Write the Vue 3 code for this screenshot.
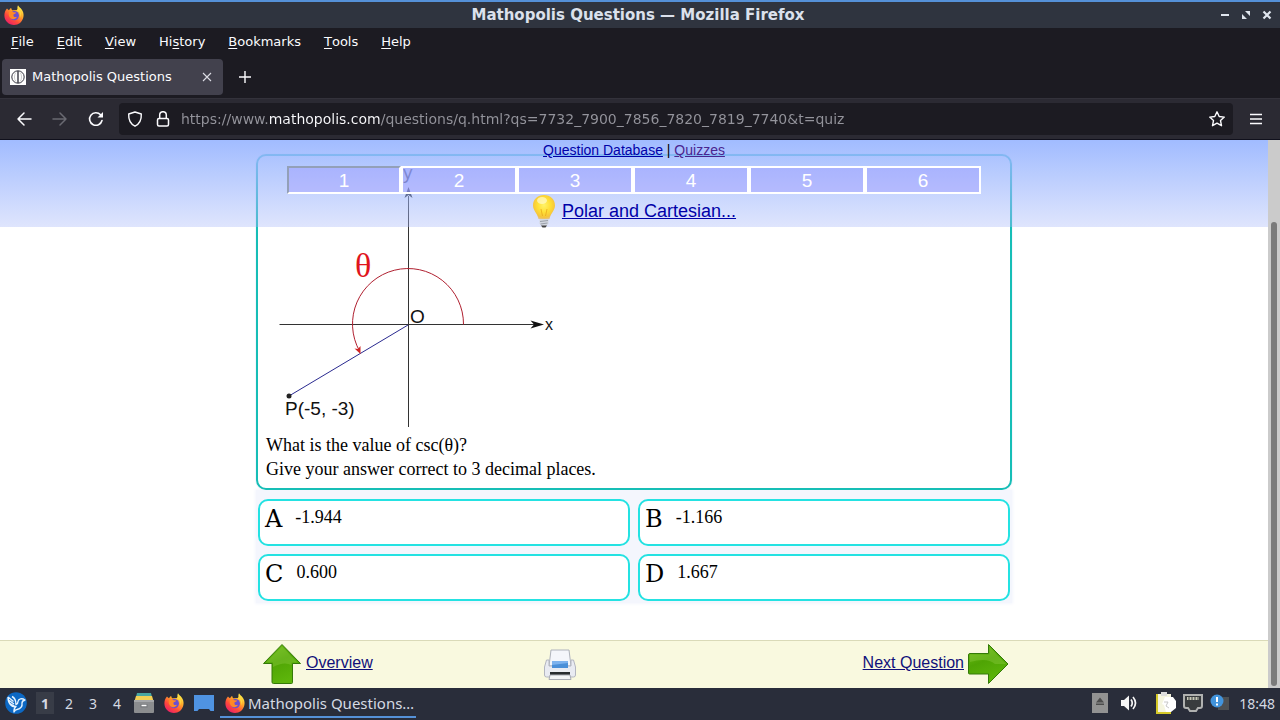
<script setup>
import { ref } from 'vue'

const menus = [
  { pre: '', key: 'F', post: 'ile' },
  { pre: '', key: 'E', post: 'dit' },
  { pre: '', key: 'V', post: 'iew' },
  { pre: 'Hi', key: 's', post: 'tory' },
  { pre: '', key: 'B', post: 'ookmarks' },
  { pre: '', key: 'T', post: 'ools' },
  { pre: '', key: 'H', post: 'elp' },
]
const address = ref('https://www.mathopolis.com/questions/q.html?qs=7732_7900_7856_7820_7819_7740&t=quiz')
const current = ref(1)
const answers = [
  { letter: 'A', value: '-1.944' },
  { letter: 'B', value: '-1.166' },
  { letter: 'C', value: '0.600' },
  { letter: 'D', value: '1.667' },
]
const desktops = [1, 2, 3, 4]
</script>

<template>
  <div class="screen">
    <svg class="defs" width="0" height="0" aria-hidden="true">
      <defs>
        <linearGradient id="fox-body" x1="0.85" y1="0.1" x2="0.25" y2="0.95">
          <stop offset="0" stop-color="#fff04a" />
          <stop offset="0.35" stop-color="#ffa52a" />
          <stop offset="0.7" stop-color="#ff4b3a" />
          <stop offset="1" stop-color="#ed2264" />
        </linearGradient>
        <linearGradient id="leaf" x1="0" y1="0" x2="0.4" y2="1">
          <stop offset="0" stop-color="#75c11c" />
          <stop offset="0.5" stop-color="#4fa404" />
          <stop offset="1" stop-color="#5db50b" />
        </linearGradient>
        <symbol id="firefox" viewBox="0 0 20 20">
          <path d="M3 3.5 C3.6 4.4 4.2 5 5 5.3 C5.7 4 6.4 3.4 7.2 3 C7.2 4 7.6 4.7 8.3 5.2 L14 5 C13.2 3.3 13.2 1.8 14 .3 C15 2 16.5 3 17.5 4.2 C19.2 6.4 20 9 19.4 12 C18.4 17 14.6 20 10 20 C4.8 20 .6 16 .4 10.8 C.3 8 1.2 5.4 3 3.5 Z" fill="url(#fox-body)" />
          <circle cx="10.3" cy="10.6" r="4.7" fill="#6b4fd0" />
          <path d="M5.3 6.3 C7 5.7 8.4 6.1 9.5 7.2 L12.2 7.5 C11.7 8.6 10.7 9 9.5 9.4 C9 11.6 10.7 12.6 13 11.7 C12 14 9 15 6.8 13.4 C4.6 12 4.2 9.2 5.3 6.3 Z" fill="#ff8926" />
          <path d="M12.6 5.3 C15.6 6.6 17 9.5 16 12.8 C18 9.5 17 6 14 3.3 Z" fill="#ffd83f" />
        </symbol>
      </defs>
    </svg>

    <header class="titlebar">
      <svg class="icon20" aria-hidden="true"><use href="#firefox" /></svg>
      <h1 class="title">Mathopolis Questions — Mozilla Firefox</h1>
      <div class="window-buttons">
        <button type="button" aria-label="Minimize"><svg width="10" height="10"><path d="M1 5H9" stroke="#dfe5ee" stroke-width="2" /></svg></button>
        <button type="button" aria-label="Restore"><svg width="10" height="10"><path d="M4 1H9V6ZM1 4V9H6Z" fill="#dfe5ee" /></svg></button>
        <button type="button" aria-label="Close"><svg width="10" height="10"><path d="M1.5 1.5L8.5 8.5M8.5 1.5L1.5 8.5" stroke="#dfe5ee" stroke-width="2.2" /></svg></button>
      </div>
    </header>

    <nav class="menubar" aria-label="Menu">
      <button v-for="m in menus" :key="m.key + m.post" type="button">{{ m.pre }}<u>{{ m.key }}</u>{{ m.post }}</button>
    </nav>

    <div class="tabs">
      <div class="tab">
        <svg width="16" height="16" aria-hidden="true">
          <rect width="16" height="16" fill="#fff" />
          <circle cx="8" cy="8" r="6.2" fill="none" stroke="#353540" stroke-width="1" />
          <path d="M8 2V14" stroke="#353540" stroke-width="1.4" />
          <path d="M5.8 3.5C4 6 4 10 5.8 12.5M10.2 3.5C12 6 12 10 10.2 12.5" fill="none" stroke="#aaa" stroke-width=".6" />
        </svg>
        <span class="tab-title">Mathopolis Questions</span>
        <button type="button" aria-label="Close tab"><svg width="10" height="10"><path d="M1 1L9 9M9 1L1 9" stroke="#dcdce4" stroke-width="1.1" /></svg></button>
      </div>
      <button class="new-tab" type="button" aria-label="New tab"><svg width="14" height="14"><path d="M7 1V13M1 7H13" stroke="#fbfbfe" stroke-width="1.4" /></svg></button>
    </div>

    <div class="toolbar">
      <button class="tool" type="button" aria-label="Back"><svg width="16" height="16"><path d="M8 2L2 8L8 14M2 8H15" fill="none" stroke="#fbfbfe" stroke-width="1.5" stroke-linecap="round" stroke-linejoin="round" /></svg></button>
      <button class="tool" type="button" aria-label="Forward" disabled><svg width="16" height="16"><path d="M8 2L14 8L8 14M14 8H1" fill="none" stroke="#6a6a72" stroke-width="1.5" stroke-linecap="round" stroke-linejoin="round" /></svg></button>
      <button class="tool" type="button" aria-label="Reload"><svg width="16" height="16"><path d="M14 9.5A6.3 6.3 0 1 1 12.6 3.8" fill="none" stroke="#fbfbfe" stroke-width="1.6" stroke-linecap="round" /><path d="M15 1V6.5H9.5Z" fill="#fbfbfe" /></svg></button>
      <div class="address">
        <svg width="16" height="16" aria-hidden="true"><path d="M8 1L14.3 3C14.6 8.6 12.8 12.8 8 15.2C3.2 12.8 1.4 8.6 1.7 3Z" fill="none" stroke="#fbfbfe" stroke-width="1.4" stroke-linejoin="round" /></svg>
        <svg width="16" height="16" aria-hidden="true"><path d="M4.7 7.5V4A3.3 3.3 0 0 1 11.3 4V7.5" fill="none" stroke="#fbfbfe" stroke-width="1.5" /><rect x="2.5" y="7.5" width="11" height="7.5" rx="1.5" fill="none" stroke="#fbfbfe" stroke-width="1.5" /></svg>
        <input v-model="address" type="text" aria-label="Address" spellcheck="false" />
        <button type="button" aria-label="Bookmark this page"><svg width="18" height="18"><path d="M9 1.8L11.2 6.5L16.3 7.1L12.5 10.6L13.5 15.7L9 13.2L4.5 15.7L5.5 10.6L1.7 7.1L6.8 6.5Z" fill="none" stroke="#fbfbfe" stroke-width="1.4" stroke-linejoin="round" /></svg></button>
      </div>
      <button class="tool app-menu" type="button" aria-label="Application menu"><svg width="14" height="14"><path d="M1 2.5H13M1 7H13M1 11.5H13" stroke="#fbfbfe" stroke-width="1.4" /></svg></button>
    </div>

    <div class="viewport">
      <div class="page">
        <div class="page-header">
          <div class="site-links"><a href="#database">Question Database</a> | <a class="visited" href="#quizzes">Quizzes</a></div>
          <nav class="steps" aria-label="Questions">
            <button v-for="n in 6" :key="n" type="button" :class="{ current: n === current }" @click="current = n">{{ n }}</button>
          </nav>
          <div class="hint">
            <svg width="24" height="34" viewBox="0 0 24 34" aria-hidden="true">
              <defs>
                <radialGradient id="glow" cx="0.5" cy="0.42" r="0.6">
                  <stop offset="0" stop-color="#fff36a" />
                  <stop offset="0.5" stop-color="#ffdf35" />
                  <stop offset="0.85" stop-color="#f5c43c" />
                  <stop offset="1" stop-color="#e6c384" />
                </radialGradient>
              </defs>
              <path d="M12 1C5.500 1 1 5.500 1 11.500C1 16.500 5 18.500 6.500 25H17.500C19 18.500 23 16.500 23 11.500C23 5.500 18.500 1 12 1Z" fill="url(#glow)" />
              <ellipse cx="10" cy="6.5" rx="5" ry="3.5" fill="#fffbd0" opacity=".7" />
              <path d="M9 15L10.5 22M15 15L13.5 22" stroke="#e9a91c" stroke-width=".8" />
              <path d="M7.500 25H16.500V29.500L14 32.500H10L7.500 29.500Z" fill="#d3d7df" />
              <path d="M8 27.500L16 26.500M8.500 30L15.500 29" stroke="#9aa0aa" />
              <path d="M9 31.5H15L13.5 33.5H10.5Z" fill="#444" />
            </svg>
            <a href="#polar">Polar and Cartesian...</a>
          </div>
        </div>

        <main class="quiz">
          <section class="question">
            <svg class="diagram" width="300" height="271" viewBox="0 0 300 271" role="img" aria-label="Angle theta from the x axis to the point P">
              <g fill="none" stroke-width="1">
                <path d="M13.5 162.5H268M142.5 265V34" stroke="#333" />
                <path d="M197.5 162.5A55.5 55.5 0 1 0 93.5 189" stroke="#b02030" />
                <path d="M142 163L23 234" stroke="#2a2a90" />
              </g>
              <path d="M278 162.5L264.5 158.5L268 162.5L264.5 166.5Z" fill="#111" />
              <path d="M142.5 25L138.5 36L142.5 33L146.5 36Z" fill="#111" />
              <path d="M94.5 192L88.5 186.5L92 187L94.5 184Z" fill="#d02525" />
              <circle cx="23" cy="234" r="2.5" fill="#222" />
              <g class="labels">
                <text x="137" y="17">y</text>
                <text class="small" x="279" y="168">x</text>
                <text x="144" y="161">O</text>
                <text x="19" y="253">P(-5, -3)</text>
              </g>
              <text class="theta" x="89" y="115">θ</text>
            </svg>
            <p>What is the value of csc(θ)?</p>
            <p>Give your answer correct to 3 decimal places.</p>
          </section>
          <div class="answers">
            <button v-for="a in answers" :key="a.letter" type="button">
              <span class="letter">{{ a.letter }}</span>
              <span class="value">{{ a.value }}</span>
            </button>
          </div>
        </main>

        <footer class="page-footer">
          <div class="footer-inner">
            <a class="overview" href="#overview">
              <svg width="40" height="42" viewBox="0 0 40 42" aria-hidden="true">
                <path d="M20 1.5L38.5 20.5H30.5V39.5Q30.5 40.5 29.5 40.5H11.5Q10 40.5 10 39V20.5H1.500Z" fill="url(#leaf)" stroke="#347a08" stroke-linejoin="round" />
                <path d="M20 3.5L35.5 19.5H29.5V22Q22 18 11 24V19.5H4Z" fill="#8ccb42" opacity=".4" />
              </svg>
              <span>Overview</span>
            </a>
            <button class="print" type="button" aria-label="Print">
              <svg width="34" height="34" viewBox="0 0 34 34">
                <path d="M8 2H26L28 18H6Z" fill="#f4f6fb" stroke="#aeb2bc" />
                <path d="M6 12H3.5L1.5 19V27Q1.5 29 3.5 29H30.5Q32.5 29 32.5 27V19L30.5 12H28V18H6Z" fill="#e9ebf2" stroke="#b3b6c0" />
                <path d="M9 13H25V20H9Z" fill="#7db2ee" />
                <path d="M9 17L25 15V20H9Z" fill="#4b8fd8" />
                <rect x="7" y="24" width="20" height="3" fill="#262a2f" />
                <path d="M7 27H27L28 31.5H6Z" fill="#f2f3f7" stroke="#a8abb5" />
              </svg>
            </button>
            <a class="next" href="#next">
              <span>Next Question</span>
              <svg width="42" height="42" viewBox="0 0 42 42" aria-hidden="true">
                <path d="M21.5 1.5L41 21L21.5 40.5V31H2.5Q1.5 31 1.5 30V12Q1.5 10.5 3 10.5H21.5Z" fill="url(#leaf)" stroke="#347a08" stroke-linejoin="round" />
                <path d="M22.5 4L39 21H28Q20 14 3 19V11.5H22.5Z" fill="#8ccb42" opacity=".4" />
              </svg>
            </a>
          </div>
        </footer>
      </div>
      <div class="scrollbar"><div class="thumb"></div></div>
    </div>

    <footer class="taskbar">
      <button class="start" type="button" aria-label="Applications">
        <svg width="22" height="22" viewBox="0 0 22 22"><circle cx="11" cy="11" r="10.8" fill="#0c68c4" /><path d="M3 5L8.500 9.500M3.500 8L9 12M5 11.500L10 14.500M3 5C3 12 7 15.500 11 14.500C9 16 8.800 18 9 20C10 18 11 17.500 12 17.500C16 17 17.500 14 17 11C17 9.500 18 8.500 20 8C17 6 13.500 6.500 13 9.500C13 11 12.500 12 11 12.500C11 10 10 6 7 4.500" fill="none" stroke="#e4f2ff" stroke-width="1.400" stroke-linejoin="round" /></svg>
      </button>
      <div class="desktops">
        <button v-for="d in desktops" :key="d" type="button" :class="{ active: d === 1 }">{{ d }}</button>
      </div>
      <div class="launchers">
        <button type="button" aria-label="Files">
          <svg width="20" height="20" viewBox="0 0 20 20"><path d="M3 0H17L18 4H2Z" fill="#49a6a1" /><path d="M2 3H18L19.5 8H.5Z" fill="#f2cf55" /><rect y="7" width="20" height="13" rx="1" fill="#8b8d8f" /><path d="M0 7H20V9H0Z" fill="#a5a7a9" /><path d="M6.5 11H13.5V14.5H6.5Z" fill="#74777a" /><path d="M7.5 12.5H12.5" stroke="#fff" stroke-width="1.5" /></svg>
        </button>
        <button type="button" aria-label="Firefox"><svg class="icon20"><use href="#firefox" /></svg></button>
        <button type="button" aria-label="Show desktop"><svg width="20" height="16"><path d="M0 0H20V16H16.5L15 14H5L3.5 16H0Z" fill="#4f93e2" /></svg></button>
      </div>
      <button class="task" type="button"><svg class="icon20" aria-hidden="true"><use href="#firefox" /></svg><span>Mathopolis Questions…</span></button>
      <div class="tray">
        <button type="button" aria-label="Removable media"><svg width="16" height="20"><rect width="16" height="20" fill="#929292" /><path d="M8 4.5L12 9.5H4ZM4 10.5H12V12H4Z" fill="#4c4c4c" /></svg></button>
        <button class="volume" type="button" aria-label="Volume"><svg width="18" height="16"><path d="M1 5H4L9 .5V15.5L4 11H1Z" fill="#f5f5f5" /><path d="M11 4.500Q13.500 8 11 11.500M13 2Q18 8 13 14" fill="none" stroke="#f5f5f5" stroke-width="1.7" /></svg></button>
        <button class="clip" type="button" aria-label="Clipboard"><svg width="20" height="22"><path d="M1 2H15V21H1Z" fill="#f5f5df" /><path d="M1 2V21H15" fill="none" stroke="#d5c928" stroke-width="2" /><path d="M5 0H11V4H5Z" fill="#ddd" /><path d="M9 5L17 5L20 9V16L15 20H10L8 13L6 12Z" fill="#fff" /><path d="M8 10H12L10 14L13 16" fill="none" stroke="#c8c8c8" /></svg></button>
        <button type="button" aria-label="Network"><svg width="20" height="18"><path d="M1 1H19V12Q19 14 17 14H15L13 17H7L5 14H3Q1 14 1 12Z" fill="#393c3e" stroke="#b0b1b0" stroke-width="2" /><path d="M4 3H16V6H4Z" fill="#c9c9b8" /><path d="M6 3V7M9 3V7M12 3V7M15 3V7" stroke="#393c3e" /></svg></button>
        <button type="button" aria-label="Updates"><svg width="20" height="20"><rect x="8" y="4" width="11" height="13" fill="#4d5052" /><circle cx="7" cy="8" r="6.5" fill="#4294dc" /><path d="M7 4V9M7 10.5V12.5" stroke="#fff" stroke-width="2" /></svg></button>
        <time>18:48</time>
      </div>
    </footer>
  </div>
</template>

<style>
body { margin: 0; }
</style>

<style scoped>
.screen { min-height: 100vh; display: flex; flex-direction: column; font-family: "Noto Sans", "DejaVu Sans", sans-serif; font-size: 14px; color: #fbfbfe; background: #1c1b22; }
button { margin: 0; padding: 0; border: 0; background: none; color: inherit; font: inherit; display: flex; align-items: center; justify-content: center; }
svg { display: block; flex: none; }
.defs { position: absolute; }
.icon20 { width: 20px; height: 20px; }

.titlebar { box-sizing: border-box; height: 28px; border-top: 2px solid #5591d8; background: #2f343f; display: grid; grid-template-columns: 1fr auto 1fr; align-items: center; padding: 0 8px 0 4px; }
.title { margin: 0; font: bold 15px/24px "DejaVu Sans", sans-serif; color: #dbe1ec; }
.window-buttons { display: flex; justify-content: flex-end; gap: 11px; }

.menubar { height: 27px; display: flex; padding-left: 11px; gap: 23px; font-family: "DejaVu Sans", sans-serif; font-size: 13px; align-items: center; }
.menubar u { text-underline-offset: 2px; }

.tabs { height: 43px; display: flex; align-items: center; padding-left: 2px; gap: 15px; font-family: "DejaVu Sans", sans-serif; font-size: 13px; }
.tab { box-sizing: border-box; width: 221px; height: 36px; border-radius: 4px; background: #42414d; display: flex; align-items: center; padding: 0 11px 0 8px; gap: 6px; }
.tab-title { flex: 1; white-space: nowrap; }

.toolbar { box-sizing: border-box; height: 42px; border-top: 1px solid #33323b; border-bottom: 1px solid #10101c; background: #2b2a33; display: flex; align-items: center; padding: 0 17px 0 16px; gap: 20px; }
.address { flex: 1; height: 32px; margin-left: -5px; background: #1c1b22; border-radius: 4px; display: flex; align-items: center; padding: 0 7px 0 8px; gap: 12px; }
.address input { flex: 1; min-width: 0; height: 24px; padding: 0; margin-left: -2px; border: 0; outline: 0; font: 14px/24px "DejaVu Sans", sans-serif; color: transparent; caret-color: #fbfbfe; background: linear-gradient(to right, #94949c 88px, #fbfbfe 88px, #fbfbfe 200px, #94949c 200px); -webkit-background-clip: text; background-clip: text; }
.app-menu { margin-left: -4px; }

.viewport { flex: 1; display: flex; background: #fff; color: #000; font-family: "Liberation Sans", Arial, sans-serif; }
.page { position: relative; flex: 1; display: flex; flex-direction: column; }
.scrollbar { width: 12px; background: #cbcbcb; display: flex; flex-direction: column; justify-content: flex-end; align-items: center; padding-bottom: 2px; box-sizing: border-box; }
.thumb { width: 6px; height: 85%; border-radius: 3px; background: #7b7b7b; }
a { color: #0000a8; }
a.visited { color: #4a2590; }

.page-header { position: absolute; top: 0; left: 0; right: 0; z-index: 1; height: 87px; background: linear-gradient(rgba(153, 182, 255, .92), rgba(166, 183, 249, .36)); display: flex; flex-direction: column; align-items: center; }
.site-links { font-size: 14px; line-height: 20px; margin-bottom: 6px; }
.steps { width: 694px; max-width: 100%; display: grid; grid-template-columns: 114fr repeat(5, 116fr); }
.steps button { height: 28px; border: 2px solid #fff; padding-top: 2px; background: rgba(150, 140, 255, .35); color: #fff; font-size: 19px; }
.steps .current { border-color: #93a0b8 #fff #fff #93a0b8; }
.hint { display: flex; align-items: center; gap: 6px; font-size: 18px; height: 34px; }

.quiz { flex: 1; width: 756px; max-width: 100%; margin: 0 auto; padding-top: 14px; }
.question { border: 2px solid #16beb6; border-radius: 10px; padding: 6px 8px 7px; background: #fff; font: 18px/24px "Liberation Serif", serif; }
.question p { margin: 0; }
.labels { font: 19px "Liberation Sans", sans-serif; fill: #111; }
.labels .small { font-size: 16px; }
.theta { font: 34px "Liberation Serif", serif; fill: #e0141c; }
.answers { display: grid; grid-template-columns: 1fr 1fr; gap: 8px; padding: 9px 2px 2px; background: #f4f6fd; box-shadow: 0 0 3px 1px #f4f6fd; }
.question { position: relative; box-shadow: 0 0 0 1px #f4f6fd; }
.answers button { box-sizing: border-box; height: 47px; border: 2px solid #24e2e2; border-radius: 10px; background: #fff; color: #000; justify-content: flex-start; align-items: flex-start; padding: 4px 5px; gap: 13px; }
.letter { font: 24px/28px "DejaVu Serif", serif; }
.value { font: 18px/24px "Liberation Serif", serif; }

.page-footer { box-sizing: border-box; height: 48px; border-top: 1px solid #dadab8; background: #f9f9df; }
.footer-inner { box-sizing: border-box; width: 756px; max-width: 100%; height: 46px; margin: 0 auto; display: grid; grid-template-columns: 281px 1fr auto; align-items: center; padding: 0 3px 0 6px; }
.footer-inner a { display: flex; align-items: center; font-size: 16px; text-decoration: none; color: #10107a; }
.footer-inner a span { text-decoration: underline; line-height: 22px; margin-bottom: 2px; }
.overview { gap: 4px; }
.next { gap: 3px; }
.print { justify-self: start; padding-top: 2px; }

.taskbar { box-sizing: border-box; height: 32px; background: #292d3a; color: #d5dae3; display: flex; align-items: center; padding: 0 5px 2px; }
.desktops { display: flex; gap: 6px; margin-left: 9px; }
.desktops button { width: 18px; height: 22px; }
.desktops .active { background: #383c47; font-weight: bold; }
.launchers { display: flex; align-items: center; gap: 10px; margin-left: 8px; }
.task { height: 28px; width: 196px; justify-content: flex-start; margin: 2px 0 0 6px; padding: 0 4px 0 5px; gap: 3px; border-bottom: 2px solid #5591d8; box-sizing: border-box; font-size: 15px; white-space: nowrap; }
.tray { margin-left: auto; display: flex; align-items: center; gap: 7px; }
.volume { margin-left: 5px; }
.clip { margin-left: 11px; }
time { margin-left: 2px; }
</style>
